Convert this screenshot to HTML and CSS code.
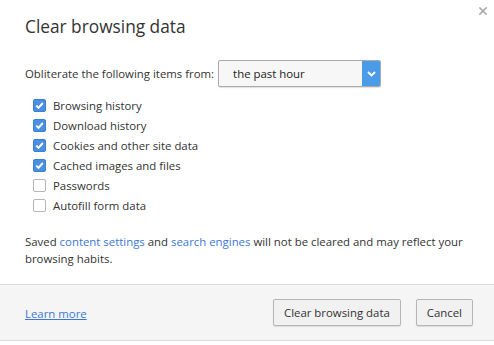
FILE: index.html
```html
<!DOCTYPE html>
<html>
<head>
<meta charset="utf-8">
<link rel="stylesheet" href="styles.css">
</head>
<body>
<div class="dialog">
  <div class="close" aria-label="Close">
    <svg width="8" height="8" viewBox="0 0 8 8"><path d="M1 1L7 7M7 1L1 7" stroke="#a8a8a8" stroke-width="1.6" stroke-linecap="square"/></svg>
  </div>
  <div class="main">
    <h1 class="title">Clear browsing data</h1>
    <div class="range-row">
      <span class="range-label">Obliterate the following items from:</span>
      <div class="select">
        <span class="select-value">the past hour</span>
        <span class="select-arrow">
          <svg width="9" height="6" viewBox="0 0 9 6"><path d="M1 1L4.5 4.5L8 1" fill="none" stroke="#fff" stroke-width="1.8"/></svg>
        </span>
      </div>
    </div>
    <ul class="options">
      <li class="option"><span class="box checked"><svg width="11" height="11" viewBox="0 0 11 11"><path d="M2.3 5.6L4.5 7.8L8.8 3" fill="none" stroke="#fff" stroke-width="1.9"/></svg></span>Browsing history</li>
      <li class="option"><span class="box checked"><svg width="11" height="11" viewBox="0 0 11 11"><path d="M2.3 5.6L4.5 7.8L8.8 3" fill="none" stroke="#fff" stroke-width="1.9"/></svg></span>Download history</li>
      <li class="option"><span class="box checked"><svg width="11" height="11" viewBox="0 0 11 11"><path d="M2.3 5.6L4.5 7.8L8.8 3" fill="none" stroke="#fff" stroke-width="1.9"/></svg></span>Cookies and other site data</li>
      <li class="option"><span class="box checked"><svg width="11" height="11" viewBox="0 0 11 11"><path d="M2.3 5.6L4.5 7.8L8.8 3" fill="none" stroke="#fff" stroke-width="1.9"/></svg></span>Cached images and files</li>
      <li class="option"><span class="box"></span>Passwords</li>
      <li class="option"><span class="box"></span>Autofill form data</li>
    </ul>
    <p class="note">Saved <a class="link" href="#">content settings</a> and <a class="link" href="#">search engines</a> will not be cleared and may reflect your browsing habits.</p>
  </div>
  <div class="footer">
    <a class="learn" href="#">Learn more</a>
    <div class="buttons">
      <button class="btn">Clear browsing data</button>
      <button class="btn">Cancel</button>
    </div>
  </div>
</div>
</body>
</html>
```
FILE: styles.css
```css
html, body {
  margin: 0;
  padding: 0;
  background: #fff;
}
body {
  font-family: "Open Sans", "Noto Sans", sans-serif;
  font-size: 11.4px;
  color: #333;
}
.dialog {
  position: relative;
  width: 494px;
  height: 345px;
  background: #fff;
  display: flex;
  flex-direction: column;
}
.close {
  position: absolute;
  top: 7px;
  right: 7px;
  width: 8px;
  height: 8px;
  display: flex;
}
.main {
  padding: 13px 25px 0 25px;
  height: 271px;
}
.title {
  margin: 0;
  font-size: 17.3px;
  font-weight: 400;
  line-height: 28px;
  color: #333;
}
.range-row {
  margin-top: 19px;
  display: flex;
  align-items: center;
  gap: 4px;
}
.select {
  width: 161px;
  height: 25px;
  border: 1px solid #aaa;
  border-radius: 2px;
  background: #f7f7f7;
  box-shadow: 0 1px 1px rgba(0,0,0,0.12);
  display: flex;
  align-items: center;
  justify-content: space-between;
  overflow: hidden;
}
.select-value {
  padding-left: 14px;
  color: #222;
}
.select-arrow {
  width: 18px;
  height: 25px;
  background: #4c9be8;
  display: flex;
  align-items: center;
  justify-content: center;
}
.options {
  list-style: none;
  margin: 8px 0 0 8px;
  padding: 0;
}
.option {
  height: 20px;
  display: flex;
  align-items: center;
  gap: 7px;
}
.box {
  width: 11px;
  height: 11px;
  border: 1px solid #b4b4b4;
  border-radius: 2px;
  background: #fff;
  display: flex;
}
.box.checked {
  background: #4a8fe0;
  border-color: #3b7fd4;
}
.note {
  margin: 18px 0 0 0;
  line-height: 17px;
}
.link {
  color: #3b77d8;
  text-decoration: none;
}
.footer {
  height: 55px;
  border-top: 1px solid #dcdcdc;
  border-bottom: 1px solid #dcdcdc;
  background: #f5f5f5;
  display: flex;
  align-items: center;
  justify-content: space-between;
  padding: 0 21px 0 25px;
}
.learn {
  color: #3b77d8;
  text-decoration: underline;
  margin-top: 2px;
}
.buttons {
  display: flex;
  gap: 15px;
}
.btn {
  font-family: inherit;
  font-size: 11.4px;
  color: #333;
  height: 27px;
  padding: 0 10px;
  border: 1px solid #b5b5b5;
  border-radius: 2px;
  background: #f1f1f1;
  box-shadow: 0 1px 1px rgba(0,0,0,0.1);
}
```
